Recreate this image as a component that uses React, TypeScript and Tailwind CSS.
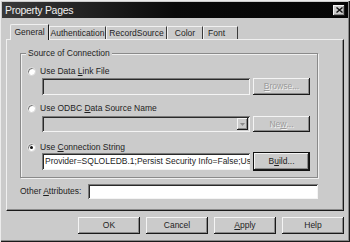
import React from "react";

const raised =
  "shadow-[inset_-1px_-1px_0_#1a1a1a,inset_1px_1px_0_#f4f4f4,inset_-2px_-2px_0_#8a8a8a]";
const sunken =
  "shadow-[inset_1px_1px_0_#7a7a7a,inset_-1px_-1px_0_#f4f4f4,inset_2px_2px_0_#2a2a2a]";

function Btn({
  children,
  w,
  h = "h-[17px]",
  disabled,
  def,
}: {
  children: React.ReactNode;
  w: string;
  h?: string;
  disabled?: boolean;
  def?: boolean;
}) {
  return (
    <div
      className={`${w} ${h} flex items-center justify-center bg-[#cbcbcb] ${raised} ${
        def ? "outline outline-1 outline-[#111]" : ""
      } ${disabled ? "text-[#9a9a9a] [text-shadow:1px_1px_0_#f2f2f2]" : "text-[#1e1e1e]"}`}
    >
      {children}
    </div>
  );
}

function Radio({ checked }: { checked?: boolean }) {
  return (
    <div className="w-[9px] h-[9px] rounded-full bg-white shadow-[inset_1px_1px_0_#7a7a7a] border border-[#d6d6d6] flex items-center justify-center">
      {checked && <div className="w-[3px] h-[3px] rounded-full bg-[#111]" />}
    </div>
  );
}

export default function App() {
  const tabs: [string, string][] = [
    ["Authentication", "w-[57px]"],
    ["RecordSource", "w-[61px]"],
    ["Color", "w-[36px]"],
    ["Font", "w-[35px]"],
  ];
  return (
    <div
      className="w-[350px] h-[242px] bg-[#cbcbcb] text-[8.5px] leading-none text-[#1e1e1e] flex flex-col pt-[2px] px-[2px] shadow-[inset_1px_1px_0_#ececec,inset_-1px_-1px_0_#1a1a1a,inset_-2px_-2px_0_#8a8a8a] overflow-hidden"
      style={{ fontFamily: '"Liberation Sans", Arial, sans-serif' }}
    >
      {/* Title bar */}
      <div className="h-[16px] flex items-center justify-between bg-gradient-to-r from-[#3a3a3a] via-[#0a0a0a] to-[#050505] pl-[3px] pr-[3px]">
        <span className="text-[10.5px] tracking-[-0.3px] text-[#f0f0f0]">Property Pages</span>
        <div className={`w-[12px] h-[11px] bg-[#cbcbcb] ${raised} flex items-center justify-center`}>
          <svg width="7" height="6" viewBox="0 0 7 6">
            <path d="M0.5 0.5 L6.5 5.5 M6.5 0.5 L0.5 5.5" stroke="#111" strokeWidth="1.4" />
          </svg>
        </div>
      </div>

      {/* Tabs */}
      <div className="flex items-end pl-[8px] mt-[5px] h-[16px]">
        <div className="w-[39px] h-[16px] flex items-center justify-center bg-[#cbcbcb] border-l border-t border-[#f0f0f0] rounded-tl-[2px] border-r-[1px] border-r-[#1a1a1a] relative z-10 mb-[-1px] pb-[1px]">
          General
        </div>
        {tabs.map(([t, w], i) => (
          <div
            key={t}
            className={`${w} h-[13px] flex items-center border-t border-l border-[#f0f0f0] border-r border-r-[#3a3a3a] ${
              i === 3 ? "pl-[4px]" : "justify-center"
            }`}
          >
            {t}
          </div>
        ))}
      </div>

      {/* Panel */}
      <div className="mx-[4px] h-[172px] border-t border-l border-[#f0f0f0] border-r border-b border-r-[#1a1a1a] border-b-[#1a1a1a] shadow-[inset_-1px_-1px_0_#8a8a8a] flex flex-col pl-[13px] pr-[25px]">
        {/* Group box */}
        <div className="mt-[13px] h-[125px] border border-[#8a8a8a] shadow-[1px_1px_0_#f0f0f0,inset_1px_1px_0_#f0f0f0] relative flex flex-col pl-[6px] pr-[6px]">
          <span className="absolute -top-[5px] left-[5px] bg-[#cbcbcb] px-[2px]">Source of Connection</span>
          <div className="flex items-center gap-[4px] mt-[13px] h-[9px]">
            <Radio />
            <span>
              Use Data <u>L</u>ink File
            </span>
          </div>
          <div className="flex items-center gap-[3px] mt-[2px] pl-[15px]">
            <div className={`w-[208px] h-[17px] bg-[#cbcbcb] ${sunken}`} />
            <Btn w="w-[57px]" disabled>
              <u>B</u>rowse...
            </Btn>
          </div>
          <div className="flex items-center gap-[4px] mt-[9px] h-[9px]">
            <Radio />
            <span>
              Use ODBC <u>D</u>ata Source Name
            </span>
          </div>
          <div className="flex items-center gap-[3px] mt-[3px] pl-[15px]">
            <div className={`w-[208px] h-[16px] bg-[#cbcbcb] ${sunken} flex justify-end items-center pr-[2px]`}>
              <div className={`w-[11px] h-[12px] ${raised} flex items-center justify-center`}>
                <svg width="5" height="3" viewBox="0 0 5 3">
                  <path d="M0 0 H5 L2.5 3 Z" fill="#8a8a8a" />
                </svg>
              </div>
            </div>
            <Btn w="w-[57px]" h="h-[16px]" disabled>
              Ne<u>w</u>...
            </Btn>
          </div>
          <div className="flex items-center gap-[4px] mt-[11px] h-[9px]">
            <Radio checked />
            <span>
              Use <u>C</u>onnection String
            </span>
          </div>
          <div className="flex items-center gap-[3px] mt-[1px] pl-[15px]">
            <div className={`w-[208px] h-[17px] bg-white ${sunken} flex items-center pl-[3px] overflow-hidden whitespace-nowrap`}>
              Provider=SQLOLEDB.1;Persist Security Info=False;Us
            </div>
            <Btn w="w-[55px] ml-[1px]" def>
              B<u>u</u>ild...
            </Btn>
          </div>
        </div>

        {/* Other attributes */}
        <div className="flex items-center mt-[6px]">
          <span className="w-[68px]">
            Other <u>A</u>ttributes:
          </span>
          <div className={`flex-1 h-[15px] bg-white ${sunken}`} />
        </div>
      </div>

      {/* Buttons */}
      <div className="flex justify-end gap-[6px] pr-[4px] mt-[6px]">
        <Btn w="w-[62px]">OK</Btn>
        <Btn w="w-[62px]">Cancel</Btn>
        <Btn w="w-[62px]">
          <u>A</u>pply
        </Btn>
        <Btn w="w-[62px]">Help</Btn>
      </div>
    </div>
  );
}
